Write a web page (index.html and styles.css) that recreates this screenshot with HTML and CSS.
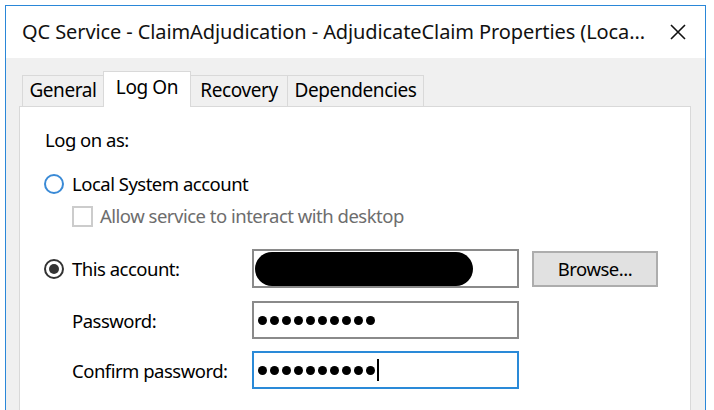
FILE: index.html
```html
<!DOCTYPE html>
<html lang="en">
<head>
<meta charset="utf-8">
<title>Service Properties</title>
<link rel="stylesheet" href="styles.css">
</head>
<body>
<div class="window">
  <div class="titlebar">
    <span class="title">QC Service - ClaimAdjudication - AdjudicateClaim Properties (Loca...</span>
    <svg class="close" width="16" height="16" viewBox="0 0 16 16" aria-label="Close">
      <path d="M1 1 L15 15 M15 1 L1 15" stroke="#111" stroke-width="1.6" fill="none"/>
    </svg>
  </div>
  <div class="client">
    <div class="tabs">
      <div class="tab tab-general">General</div>
      <div class="tab active tab-logon">Log On</div>
      <div class="tab tab-recovery">Recovery</div>
      <div class="tab tab-deps">Dependencies</div>
    </div>
    <div class="panel">
      <div class="heading">Log on as:</div>
      <div class="row row-local">
        <span class="radio focus"></span>
        <span class="text">Local System account</span>
      </div>
      <div class="row row-check">
        <span class="checkbox"></span>
        <span class="text disabled">Allow service to interact with desktop</span>
      </div>
      <div class="row row-account">
        <span class="radio checked"></span>
        <span class="label">This account:</span>
        <div class="input"><span class="redact"></span></div>
        <button class="btn">Browse...</button>
      </div>
      <div class="row row-pw">
        <span class="label">Password:</span>
        <div class="input"><span class="dots" aria-label="password"><i></i><i></i><i></i><i></i><i></i><i></i><i></i><i></i><i></i><i></i></span></div>
      </div>
      <div class="row row-confirm">
        <span class="label">Confirm password:</span>
        <div class="input focused"><span class="dots" aria-label="password"><i></i><i></i><i></i><i></i><i></i><i></i><i></i><i></i><i></i><i></i></span><span class="caret"></span></div>
      </div>
    </div>
  </div>
</div>
</body>
</html>
```
FILE: styles.css
```css
* { box-sizing: border-box; }
html, body { margin: 0; padding: 0; background: #fff; overflow: hidden; }
body {
  font-family: "Noto Sans", "Open Sans", sans-serif;
  font-size: 18.5px;
  letter-spacing: -0.5px;
  color: #000;
  padding: 5px 0 0 5px;
  height: 410px;
}
.window {
  width: 701px;
  height: 420px;
  border: 1px solid #2a87d8;
  border-bottom: none;
  background: #f0f0f0;
  display: flex;
  flex-direction: column;
}
.titlebar {
  height: 52px;
  background: #fff;
  display: flex;
  align-items: center;
  padding: 0 0 0 16px;
  flex: none;
}
.title {
  flex: 1;
  white-space: nowrap;
  overflow: hidden;
  line-height: 26px;
  font-size: 20px;
  letter-spacing: -0.1px;
  color: #111;
}
.close {
  margin: 0 19px 0 12px;
  flex: none;
}
.client {
  flex: 1;
  padding: 13px 14px 0 13px;
  display: flex;
  flex-direction: column;
}
.tabs {
  display: flex;
  align-items: flex-end;
  height: 35px;
  padding-left: 3px;
  flex: none;
}
.tab {
  height: 31px;
  border: 1px solid #d9d9d9;
  border-bottom: none;
  background: #f0f0f0;
  line-height: 29px;
  text-align: center;
  margin-left: -1px;
  padding: 0 6px;
  font-size: 19px;
  letter-spacing: -0.4px;
}
.tab:first-child { margin-left: 0; }
.tab.active {
  height: 36px;
  margin-bottom: -1px;
  background: #fff;
  position: relative;
  z-index: 1;
  line-height: 30px;
}
.tab-general { width: 82px; }
.tab-logon { width: 88px; }
.tab-recovery { width: 98px; }
.tab-deps { width: 137px; }
.panel {
  flex: 1;
  background: #fff;
  border: 1px solid #d9d9d9;
  padding: 20px 0 0 24px;
}
.heading {
  height: 26px;
  line-height: 26px;
  margin-left: 1px;
}
.row {
  display: flex;
  align-items: center;
}
.row-local { height: 26px; margin-top: 18px; }
.row-check { height: 26px; margin-top: 6px; margin-left: 28px; }
.row-account { height: 39px; margin-top: 20px; }
.row-pw { height: 38px; margin-top: 13px; margin-left: 28px; }
.row-confirm { height: 38px; margin-top: 12px; margin-left: 28px; }
.text { line-height: 26px; }
.row-local .text { margin-left: 8px; }
.disabled { color: #6d6d6d; margin-left: 7px; }
.radio {
  width: 20px;
  height: 20px;
  border-radius: 50%;
  border: 2px solid #333;
  background: #fff;
  flex: none;
  display: flex;
  align-items: center;
  justify-content: center;
}
.radio.focus { border-color: #3a8ad6; }
.radio.checked::after {
  content: "";
  width: 10px;
  height: 10px;
  border-radius: 50%;
  background: #333;
}
.checkbox {
  width: 21px;
  height: 21px;
  border: 2px solid #cccccc;
  background: #fff;
  flex: none;
}
.label { width: 180px; flex: none; }
.row-account .label { margin-left: 8px; }
.input {
  width: 267px;
  height: 100%;
  border: 2px solid #8a8a8a;
  background: #fff;
  display: flex;
  align-items: center;
  padding-left: 4px;
}
.row-account .input { padding-left: 1px; }
.input.focused { border-color: #2a8ad8; }
.redact {
  width: 218px;
  height: 34px;
  border-radius: 17px;
  background: #000;
}
.btn {
  margin-left: 13px;
  width: 126px;
  height: 36px;
  background: #e1e1e1;
  border: 2px solid #adadad;
  font: inherit;
  letter-spacing: inherit;
  color: #000;
  padding: 0;
}
.dots { display: flex; gap: 3px; }
.dots i {
  width: 9px;
  height: 9px;
  border-radius: 50%;
  background: #000;
}
.caret {
  width: 2px;
  height: 22px;
  background: #000;
  margin-left: 2px;
}
```
